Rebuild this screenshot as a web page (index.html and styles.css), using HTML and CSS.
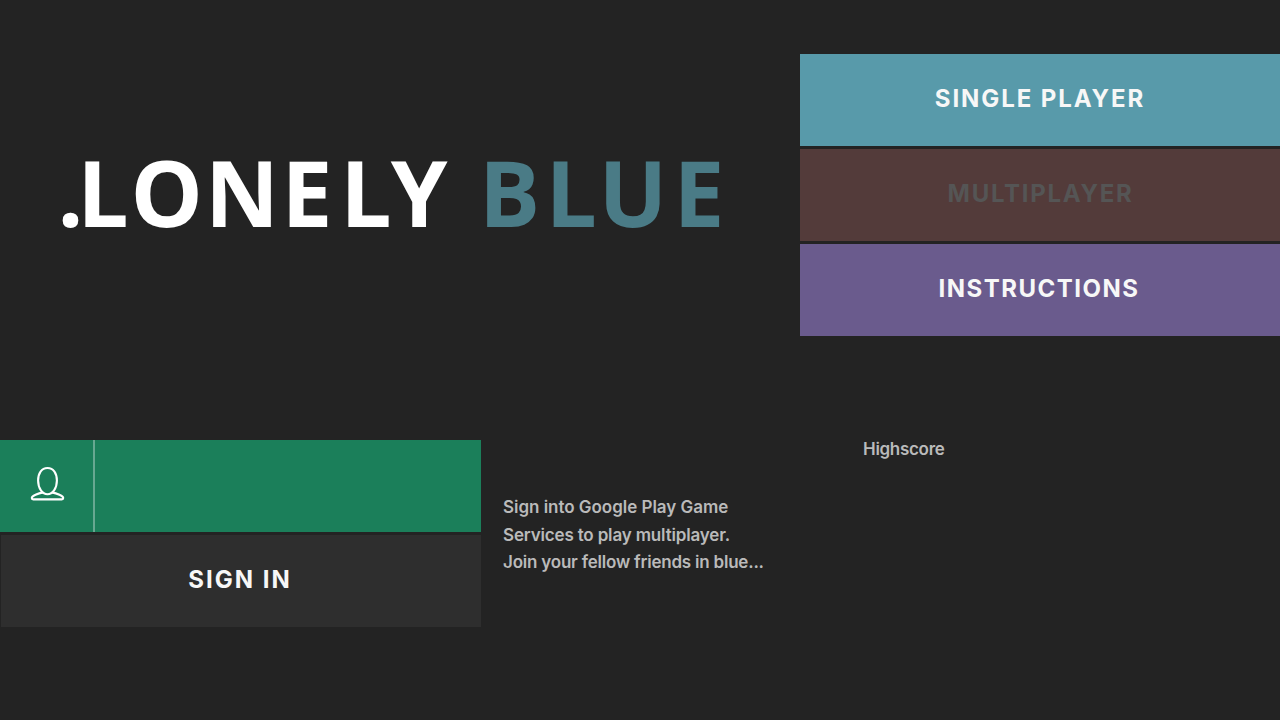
FILE: index.html
```html
<!DOCTYPE html>
<html lang="en">
<head>
<meta charset="utf-8">
<title>.Lonely Blue</title>
<link rel="stylesheet" href="styles.css">
</head>
<body>
<main class="screen">
  <section class="top">
    <h1 class="brand">
      <svg class="wordmark" viewBox="0 0 800 150" role="img" aria-label=".LONELY BLUE">
        <text class="white" y="107.4" x="57.5 77.2 130.4 205 281.4 340.2 390.8">.LONELY</text>
        <text class="blue" y="107.4" x="479 545.4 598.6 673.6">BLUE</text>
      </svg>
    </h1>
    <nav class="menu">
      <button class="btn single"><span class="t-single">SINGLE PLAYER</span></button>
      <button class="btn multi" disabled><span class="t-multi">MULTIPLAYER</span></button>
      <button class="btn instructions"><span class="t-instr">INSTRUCTIONS</span></button>
    </nav>
  </section>
  <section class="bottom">
    <div class="account">
      <div class="profile">
        <div class="avatar">
          <svg width="36" height="36" viewBox="0 0 36 36" fill="none" stroke="#fff" stroke-width="2.1" stroke-linejoin="round">
            <path d="M17.5 2C11.5 2 8.1 7.2 8.1 14.5C8.1 22.5 12.5 28.2 17.5 28.2S26.9 22.5 26.9 14.5C26.9 7.2 23.5 2 17.5 2Z"/>
            <path d="M13.2 26.4C8 27.4 1.8 30 1.8 32Q1.8 33.4 3.2 33.4H31.8Q33.2 33.4 33.2 32C33.2 30 27 27.4 21.8 26.4"/>
          </svg>
        </div>
      </div>
      <button class="btn signin"><span class="t-sign">SIGN IN</span></button>
    </div>
    <p class="hint"><span class="h1">Sign into Google Play Game</span><span class="h2">Services to play multiplayer.</span><span class="h3">Join your fellow friends in blue...</span></p>
    <div class="score">Highscore</div>
  </section>
</main>
</body>
</html>
```
FILE: styles.css
```css
* { box-sizing: border-box; }
body { margin: 0; background: #232323; font-family: Inter, "Liberation Sans", sans-serif; }
.screen { width: 1280px; height: 720px; overflow: hidden; background: #232323; padding-top: 54px; }
.top { display: grid; grid-template-columns: 800px 480px; height: 386px; }
.brand { margin: 66px 0 0; }
.wordmark { display: block; width: 800px; height: 150px; overflow: visible; }
.wordmark text { font: 700 91px "Open Sans", "Noto Sans", sans-serif; }
.white { fill: #fff; }
.blue { fill: #4a7b86; }
.menu { display: flex; flex-direction: column; gap: 3px; }
.btn { display: flex; align-items: center; justify-content: center; width: 100%; height: 92px; margin: 0; padding: 0 0 2px; border: 0; color: #f7f7f7; font: 700 24px/30px Inter, "Liberation Sans", sans-serif; white-space: nowrap; }
.single { background: #589aaa; }
.multi { background: #533b3a; color: #555; }
.instructions { background: #6a5b8d; }
.t-single { letter-spacing: 1.9px; }
.t-multi { letter-spacing: 1.7px; margin-left: 1px; }
.t-instr { letter-spacing: 1.5px; margin-right: 2px; }
.t-sign { letter-spacing: 2px; margin-right: 2px; }
.bottom { display: grid; grid-template-columns: 503px 360px 417px; }
.account { width: 481px; display: flex; flex-direction: column; gap: 3px; }
.profile { height: 92px; background: #1b7f5a; }
.avatar { width: 95px; height: 92px; padding: 26px 0 0 30px; border-right: 2px solid #67a891; }
.signin { width: 480px; margin-left: 1px; background: #2e2e2e; }
.hint { margin: 54px 0 0; display: flex; flex-direction: column; align-items: flex-start; color: #bababa; font-size: 17px; font-weight: 600; line-height: 27.5px; white-space: nowrap; }
.h1 { letter-spacing: -0.03px; }
.h2 { letter-spacing: -0.16px; }
.h3 { letter-spacing: -0.21px; }
.score { color: #bababa; font-size: 17px; font-weight: 600; line-height: 19px; letter-spacing: -0.3px; }
```
